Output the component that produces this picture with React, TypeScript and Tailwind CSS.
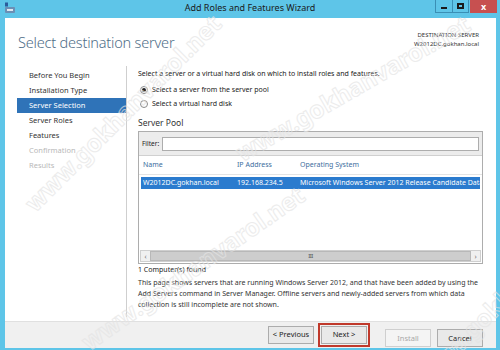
import React from 'react';

const navItems = [
  { label: 'Before You Begin', state: 'done' },
  { label: 'Installation Type', state: 'done' },
  { label: 'Server Selection', state: 'active' },
  { label: 'Server Roles', state: 'done' },
  { label: 'Features', state: 'done' },
  { label: 'Confirmation', state: 'off' },
  { label: 'Results', state: 'off' },
];

function Radio({ checked, label }: { checked?: boolean; label: string }) {
  return (
    <div className="flex items-center gap-[4px] h-[14px]">
      <span className="w-[8px] h-[8px] rounded-full border border-[#8a8a8a] bg-white flex items-center justify-center">
        {checked && <span className="w-[4px] h-[4px] rounded-full bg-[#222]" />}
      </span>
      <span>{label}</span>
    </div>
  );
}

function Btn({ children, disabled }: { children: React.ReactNode; disabled?: boolean }) {
  return (
    <button
      className={
        'w-[46px] h-[18px] border text-[7.5px] leading-none ' +
        (disabled
          ? 'border-[#cfcfcf] bg-[#f4f4f4] text-[#a8a8a8]'
          : 'border-[#acacac] bg-[#e9e9e9] text-[#222]')
      }
    >
      {children}
    </button>
  );
}

// faint diagonal watermark that sits over the screenshot
function Watermark({ className }: { className: string }) {
  return (
    <div
      aria-hidden
      className={
        'absolute pointer-events-none select-none whitespace-nowrap text-[24px] font-bold text-transparent [-webkit-text-stroke:1px_#e4e4e4] opacity-70 ' +
        className
      }
    >
      www.gokhanvarol.net
    </div>
  );
}

export default function App() {
  return (
    <div
      className="w-[500px] h-[350px] bg-[#5ec5e8] flex flex-col overflow-hidden relative"
      style={{ fontFamily: '"Noto Sans", "Open Sans", sans-serif' }}
    >
      {/* Title bar */}
      <div className="h-[18px] relative flex items-center justify-center shrink-0">
        <svg className="absolute left-[4px] top-[2px]" width="12" height="12" viewBox="0 0 12 12">
          <rect x="1" y="0.5" width="3" height="4" fill="#2a5d9c" />
          <rect x="1" y="5" width="10" height="6" rx="1" fill="#6a8fb5" />
          <rect x="3" y="7" width="6" height="2" fill="#dfe8f1" />
        </svg>
        <span className="text-[9px] text-[#1a1a1a] mt-[-2px]">Add Roles and Features Wizard</span>
        <div className="absolute right-[3px] top-0 flex">
          <div className="w-[18px] h-[13px] border border-[#3a8fb5] border-t-0 bg-[#5ec5e8] flex items-end justify-center pb-[3px]">
            <span className="w-[6px] h-[2px] bg-[#1a1a1a]" />
          </div>
          <div className="w-[16px] h-[13px] border border-[#3a8fb5] border-t-0 border-l-0 bg-[#5ec5e8] flex items-center justify-center">
            <span className="w-[7px] h-[6px] border-[2px] border-[#1a1a1a]" />
          </div>
          <div className="w-[27px] h-[13px] ml-[1px] bg-[#c75050] flex items-center justify-center text-white text-[9px] font-bold leading-none">
            x
          </div>
        </div>
      </div>

      {/* Window body */}
      <div className="flex-1 min-w-0 ml-[5px] mr-[4px] mb-[2px] bg-white flex flex-col text-[#1e1e1e] overflow-hidden">
        {/* Header */}
        <div className="h-[47px] shrink-0 flex justify-between pl-[13px] pr-[17px]">
          <div className="pt-[14px] text-[14.5px] font-light text-[#4f6e88] leading-[20px] tracking-[-0.2px]">
            Select destination server
          </div>
          <div className="pt-[13px] text-right text-[6px] leading-[9px] text-[#333]">
            <div>DESTINATION SERVER</div>
            <div>W2012DC.gokhan.local</div>
          </div>
        </div>

        {/* Main */}
        <div className="flex-1 flex min-h-0 min-w-0">
          <div className="w-[122px] shrink-0 pt-[3px] pb-[4px] flex">
            <div className="flex-1 pl-[12px] text-[7.5px]">
              {navItems.map(n => (
                <div
                  key={n.label}
                  className={
                    'h-[15px] pl-[12px] flex items-center ' +
                    (n.state === 'active'
                      ? 'bg-[#2f73b8] text-white'
                      : n.state === 'off'
                        ? 'text-[#b8b8b8]'
                        : 'text-[#333]')
                  }
                >
                  {n.label}
                </div>
              ))}
            </div>
            <div className="w-px bg-[#cfcfcf] mt-[-2px]" />
          </div>

          <div className="flex-1 min-w-0 pl-[11px] pr-[13px] pt-[3px] text-[7px] text-[#222]">
            <div className="h-[11px] leading-[11px]">
              Select a server or a virtual hard disk on which to install roles and features.
            </div>
            <div className="mt-[4px] pl-[2px]">
              <Radio checked label="Select a server from the server pool" />
              <Radio label="Select a virtual hard disk" />
            </div>
            <div className="mt-[6px] text-[8.5px] leading-[12px] text-[#333]">Server Pool</div>

            <div className="mt-[2px] h-[133px] border border-[#adadad] flex flex-col">
              <div className="h-[24px] shrink-0 bg-[#ececec] border-b border-[#d0d0d0] flex items-center px-[3px] gap-[3px]">
                <span className="text-[6.5px]">Filter:</span>
                <div className="flex-1 h-[14px] bg-white border border-[#adadad]" />
              </div>
              <div className="flex-1 flex flex-col bg-white min-w-0">
                <div className="h-[19px] shrink-0 flex items-center text-[#3d6e9e] border-b border-[#e4e4e4] text-[7px]">
                  <span className="w-[98px] pl-[4px]">Name</span>
                  <span className="w-[63px]">IP Address</span>
                  <span>Operating System</span>
                </div>
                <div className="mt-[2px] mx-[2px] h-[12px] shrink-0 bg-[#2b7bce] text-white flex items-center whitespace-nowrap overflow-hidden text-[7px]">
                  <span className="w-[96px] pl-[2px] shrink-0">W2012DC.gokhan.local</span>
                  <span className="w-[63px] shrink-0">192.168.234.5</span>
                  <span>Microsoft Windows Server 2012 Release Candidate Datacenter</span>
                </div>
                <div className="flex-1" />
                <div className="h-[12px] shrink-0 mx-[1px] mb-[1px] flex items-center border border-[#cfcfcf] bg-[#f0f0f0]">
                  <span className="w-[9px] text-[7px] text-[#777] text-center leading-none">&lsaquo;</span>
                  <div className="flex-1 h-[10px] bg-[#cdcdcd] border border-[#b8b8b8] flex items-center justify-center">
                    <span className="text-[6px] leading-none text-[#555] tracking-[-0.5px]">III</span>
                  </div>
                  <span className="w-[9px] text-[7px] text-[#777] text-center leading-none">&rsaquo;</span>
                </div>
              </div>
            </div>

            <div className="leading-[11px]">1 Computer(s) found</div>
            <div className="mt-[2px] leading-[11px] text-[#333]">
              This page shows servers that are running Windows Server 2012, and that have been added by using the
              Add Servers command in Server Manager. Offline servers and newly-added servers from which data
              collection is still incomplete are not shown.
            </div>
          </div>
        </div>

        {/* Footer */}
        <div className="h-[27px] shrink-0 bg-[#f0f0f0] border-t border-[#e0e0e0] flex items-center justify-end pr-[13px]">
          <Btn>&lt; Previous</Btn>
          <div className="ml-[4px] p-[1px] border-2 border-[#c0392b] flex">
            <Btn>Next &gt;</Btn>
          </div>
          <div className="ml-[15px]">
            <Btn disabled>Install</Btn>
          </div>
          <div className="ml-[6px]">
            <Btn>Cancel</Btn>
          </div>
        </div>
      </div>

      <Watermark className="left-[-10px] top-[95px] -rotate-[45deg]" />
      <Watermark className="left-[220px] top-[70px] -rotate-[30deg]" />
      <Watermark className="left-[60px] top-[250px] -rotate-[35deg]" />
      <Watermark className="left-[380px] top-[270px] -rotate-[45deg]" />
    </div>
  );
}
